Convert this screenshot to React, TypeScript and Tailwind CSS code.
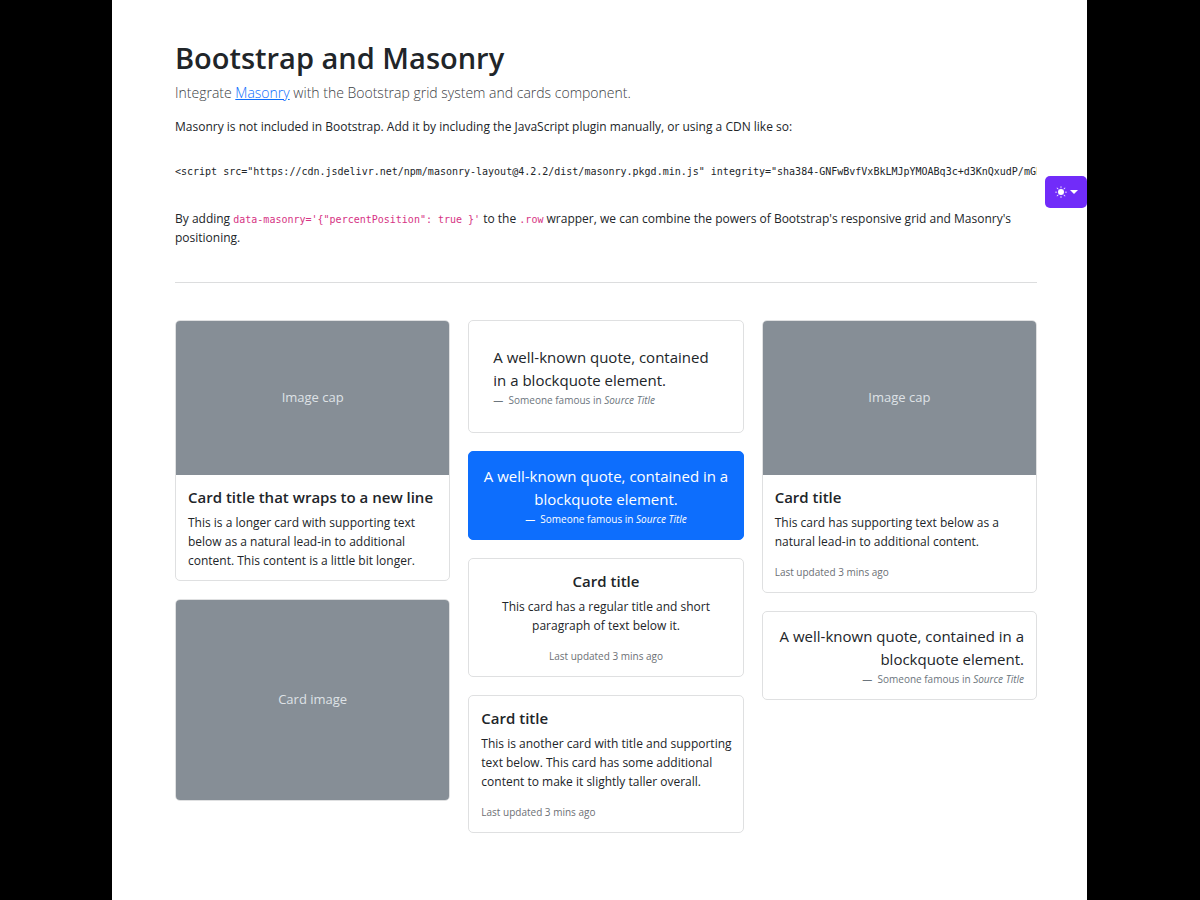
import type { ReactNode } from 'react';

function Card({ className = 'border-[#dfe0e1] bg-white', children }: { className?: string; children: ReactNode }) {
  return <article className={`overflow-hidden rounded-[5px] border ${className}`}>{children}</article>;
}

function Placeholder({ label, className }: { label: string; className: string }) {
  return (
    <div role="img" aria-label={label} className={`flex items-center justify-center bg-[#868e96] text-[13px] text-[#dee2e6] ${className}`}>
      {label}
    </div>
  );
}

function CardBody({ title, text, updated = false, centered = false }: { title: string; text: string; updated?: boolean; centered?: boolean }) {
  return (
    <div className={`pt-[13px] ${updated ? 'pb-[11px]' : 'pb-2.5'} ${centered ? 'px-3 text-center' : 'pr-2 pl-3'}`}>
      <h2 className="mb-1.5 text-[15px] leading-[19px] font-semibold">{title}</h2>
      <p className="leading-[19px]">{text}</p>
      {updated && <p className="mt-3 text-[10px] leading-[18px] text-[#6c7075]">Last updated 3 mins ago</p>}
    </div>
  );
}

function Quote({ className = 'px-3 pt-[13px] pb-[11px]', footer = 'text-[#6c757d]' }: { className?: string; footer?: string }) {
  return (
    <figure className={className}>
      <blockquote className="text-[15px] leading-[23px]">A well-known quote, contained in a blockquote element.</blockquote>
      <figcaption className={`text-[10px] leading-[17px] ${footer}`}>
        —&nbsp; Someone famous in <cite>Source Title</cite>
      </figcaption>
    </figure>
  );
}

function ThemeButton() {
  return (
    <button type="button" aria-label="Toggle theme" className="absolute top-44 right-0 flex h-8 w-[42px] items-center justify-center gap-[3px] rounded-[5px] bg-[#712cf9] text-white">
      <svg viewBox="0 0 16 16" fill="currentColor" className="size-3">
        <path d="M8 12a4 4 0 1 0 0-8 4 4 0 0 0 0 8M8 0a.5.5 0 0 1 .5.5v2a.5.5 0 0 1-1 0v-2A.5.5 0 0 1 8 0m0 13a.5.5 0 0 1 .5.5v2a.5.5 0 0 1-1 0v-2A.5.5 0 0 1 8 13m8-5a.5.5 0 0 1-.5.5h-2a.5.5 0 0 1 0-1h2a.5.5 0 0 1 .5.5M3 8a.5.5 0 0 1-.5.5h-2a.5.5 0 0 1 0-1h2A.5.5 0 0 1 3 8m10.657-5.657a.5.5 0 0 1 0 .707l-1.414 1.415a.5.5 0 1 1-.707-.708l1.414-1.414a.5.5 0 0 1 .707 0m-9.193 9.193a.5.5 0 0 1 0 .707L3.05 13.657a.5.5 0 0 1-.707-.707l1.414-1.414a.5.5 0 0 1 .707 0m9.193 2.121a.5.5 0 0 1-.707 0l-1.414-1.414a.5.5 0 0 1 .707-.707l1.414 1.414a.5.5 0 0 1 0 .707M4.464 4.465a.5.5 0 0 1-.707 0L2.343 3.05a.5.5 0 1 1 .707-.707l1.414 1.414a.5.5 0 0 1 0 .708" />
      </svg>
      <svg viewBox="0 0 8 4" fill="currentColor" className="h-1 w-2">
        <path d="M0 0h8L4 4z" />
      </svg>
    </button>
  );
}

function Code({ children }: { children: string }) {
  return <code className="font-['DejaVu_Sans_Mono',monospace] text-[10px] leading-none text-[#d63384]">{children}</code>;
}

const scriptTag =
  '<script src="https://cdn.jsdelivr.net/npm/masonry-layout@4.2.2/dist/masonry.pkgd.min.js" integrity="sha384-GNFwBvfVxBkLMJpYMOABq3c+d3KnQxudP/mGPkzpZSTYykLBNsZEnG2D9G/X/+7D" crossorigin="anonymous" async></script>';

export default function App() {
  return (
    <div className="min-h-screen bg-black pr-[113px] pl-28 font-['Open_Sans','Noto_Sans',sans-serif] text-[12px] text-[#212529]">
      <div className="relative min-h-screen bg-white pt-[39px] pr-[50px] pb-12 pl-[63px]">
        <ThemeButton />
        <main>
          <h1 className="mb-[5px] text-[29px] leading-[37px] font-semibold">Bootstrap and Masonry</h1>
          <p className="mb-[13px] text-[14px] leading-[23px] font-light text-[#3c4044]">
            Integrate{' '}
            <a href="https://masonry.desandro.com/" className="text-[#0d6efd] underline">
              Masonry
            </a>{' '}
            with the Bootstrap grid system and cards component.
          </p>
          <p className="leading-[19px]">
            Masonry is not included in Bootstrap. Add it by including the JavaScript plugin manually, or using a CDN like so:
          </p>
          <pre className="mt-[27px] overflow-hidden font-['DejaVu_Sans_Mono',monospace] text-[10px] leading-[18px]">
            <code className="font-['DejaVu_Sans_Mono',monospace]">{scriptTag}</code>
          </pre>
          <p className="mt-7 leading-[19px]">
            By adding <Code>{`data-masonry='{"percentPosition": true }'`}</Code> to the <Code>.row</Code> wrapper, we can combine the powers of
            Bootstrap's responsive grid and Masonry's positioning.
          </p>
          <hr className="mt-[35px] mb-[37px] border-[#dcddde]" />
          <div className="grid grid-cols-3 items-start gap-[18px]">
            <div className="flex flex-col gap-[18px]">
              <Card>
                <Placeholder label="Image cap" className="h-[154px]" />
                <CardBody
                  title="Card title that wraps to a new line"
                  text="This is a longer card with supporting text below as a natural lead-in to additional content. This content is a little bit longer."
                />
              </Card>
              <Card>
                <Placeholder label="Card image" className="h-[200px]" />
              </Card>
            </div>
            <div className="flex flex-col gap-[18px]">
              <Card>
                <Quote className="px-6 pt-[25px] pb-[23px]" />
              </Card>
              <Card className="border-[#0d6efd] bg-[#0d6efd] text-center text-white">
                <Quote footer="text-white" />
              </Card>
              <Card>
                <CardBody title="Card title" text="This card has a regular title and short paragraph of text below it." updated centered />
              </Card>
              <Card>
                <CardBody
                  title="Card title"
                  text="This is another card with title and supporting text below. This card has some additional content to make it slightly taller overall."
                  updated
                />
              </Card>
            </div>
            <div className="flex flex-col gap-[18px]">
              <Card>
                <Placeholder label="Image cap" className="h-[154px]" />
                <CardBody title="Card title" text="This card has supporting text below as a natural lead-in to additional content." updated />
              </Card>
              <Card className="border-[#dfe0e1] bg-white text-right">
                <Quote />
              </Card>
            </div>
          </div>
        </main>
      </div>
    </div>
  );
}
